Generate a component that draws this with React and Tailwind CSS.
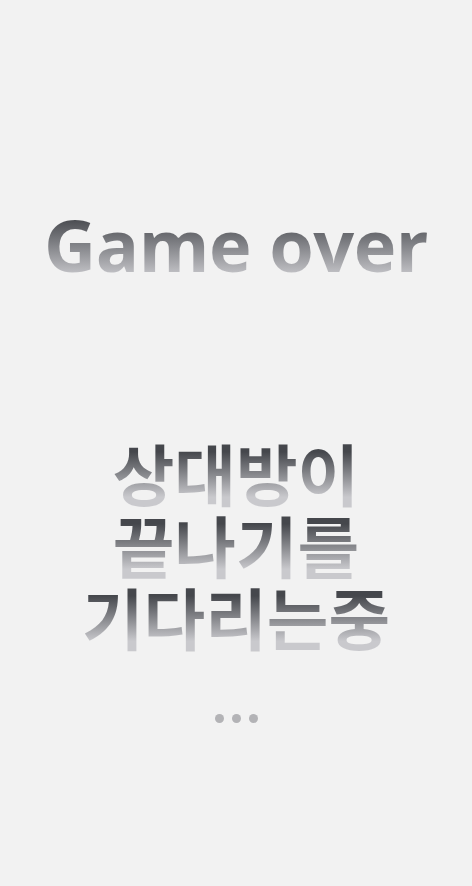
import React from 'react';

const grad = 'bg-[linear-gradient(to_bottom,#45474c_22%,#c9c9cd_85%)] bg-clip-text text-transparent';

export default function App() {
  return (
    <div className="w-[472px] h-[886px] bg-[#f2f2f2] flex flex-col items-center font-['Open_Sans','Noto_Sans_CJK_KR',sans-serif]">
      <div className={`mt-[196px] text-[72px] leading-[96px] font-bold tracking-[-0.5px] ${grad}`}>Game over</div>
      {/* one block, gradient repeats every line */}
      <p className={`mt-[144px] text-center font-['Noto_Sans_CJK_KR',sans-serif] font-bold text-[67px] leading-[72px] bg-[length:100%_72px] bg-repeat-y ${grad}`}>
        상대방이
        <br />
        끝나기를
        <br />
        기다리는중
      </p>
      <div className="mt-[62px] flex gap-[8px]">
        <span className="w-[9px] h-[9px] rounded-full bg-[#b3b3b6]" />
        <span className="w-[9px] h-[9px] rounded-full bg-[#b3b3b6]" />
        <span className="w-[9px] h-[9px] rounded-full bg-[#b3b3b6]" />
      </div>
    </div>
  );
}
